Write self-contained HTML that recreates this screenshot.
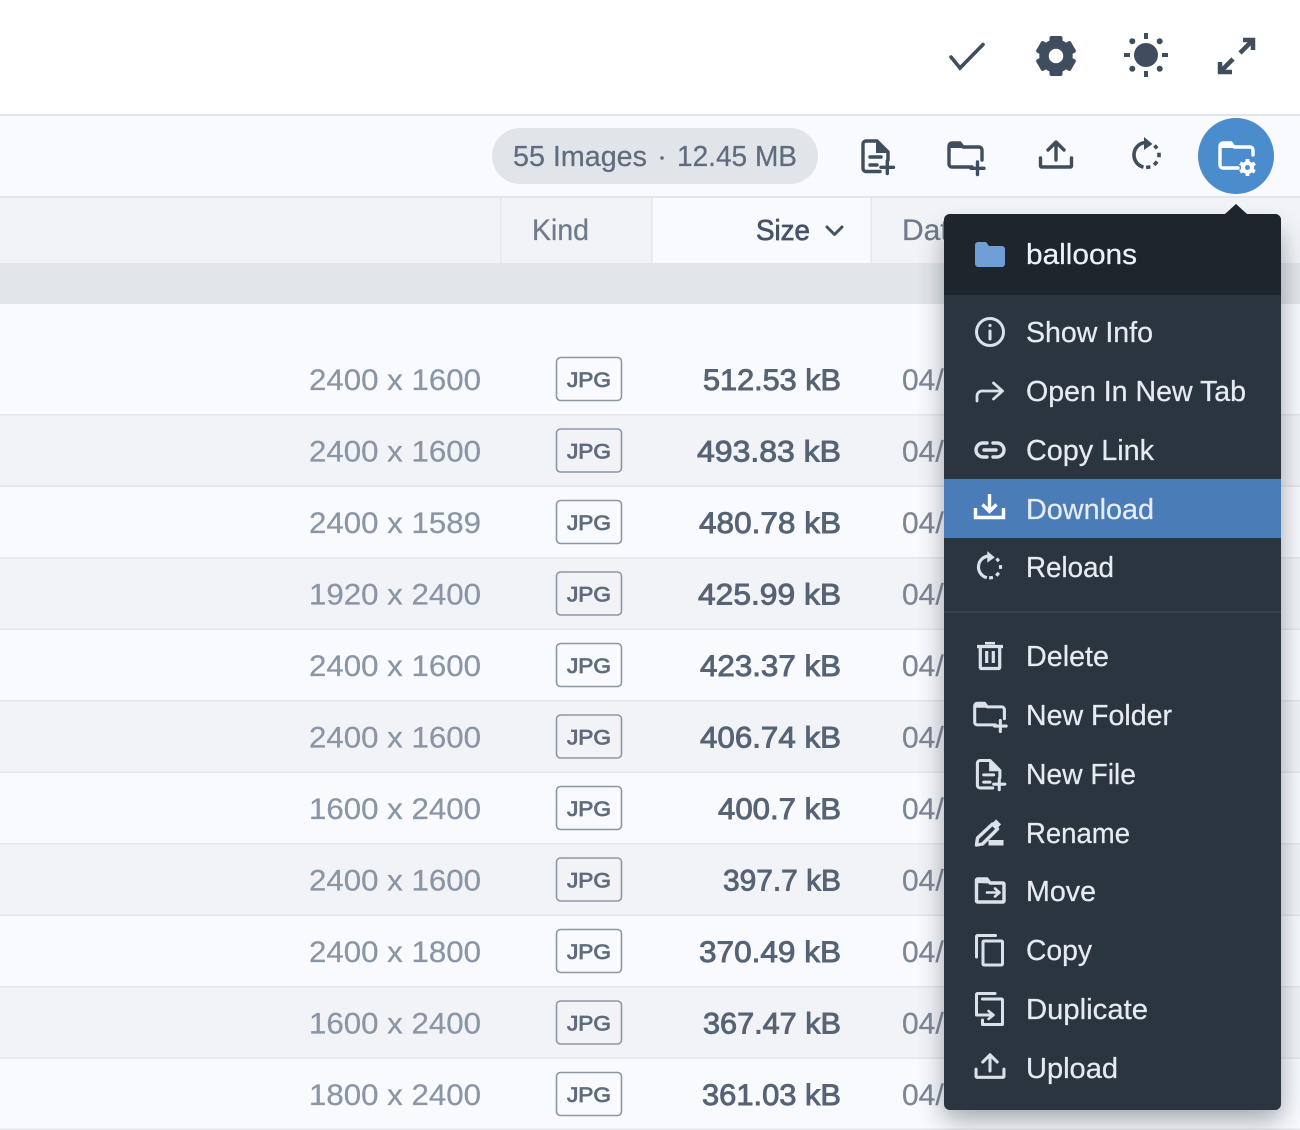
<!DOCTYPE html>
<html><head><meta charset="utf-8"><title>Files</title>
<style>
html,body{margin:0;padding:0;background:#fff}
svg{display:block}
text{font-family:"Liberation Sans",sans-serif}
.d{font-size:30px;fill:#8a96a6;stroke:#8a96a6;stroke-width:.25}
.s{font-size:30px;fill:#566375;stroke:#566375;stroke-width:.9}
.j{font-size:21px;fill:#5f6c7d;stroke:#5f6c7d;stroke-width:.85}
.t{font-size:30px;fill:#6f7a8a;stroke:#6f7a8a;stroke-width:.25}
.m{font-size:29px;fill:#e6ebf0;stroke:#e6ebf0;stroke-width:.25}
.b{fill:none;stroke:#8c97a5;stroke-width:1.6}
.i{fill:none;stroke:currentColor;stroke-width:3.4;stroke-linecap:round;stroke-linejoin:round}
.f{fill:currentColor;stroke:none}
</style></head><body>
<svg width="1300" height="1130" viewBox="0 0 1300 1130" xmlns="http://www.w3.org/2000/svg">
<defs>
<filter id="sh" x="-20%" y="-20%" width="140%" height="140%"><feGaussianBlur stdDeviation="13"/></filter>
<symbol id="folderplus" overflow="visible"><g class="i"><path d="M6,11 H-14 a3,3 0 0 1 -3,-3 V-10 a3,3 0 0 1 3,-3 H-6 l3,4 H13 a3,3 0 0 1 3,3 V4"/><path class="f" d="M-17,-8 V-10 a3,3 0 0 1 3,-3 H-6 l4,5 Z"/><path d="M11.500,6 V18.500 M5,12.300 H18"/></g></symbol>
<symbol id="fileplus" overflow="visible"><g class="i"><path d="M3,15.500 H-11 a3,3 0 0 1 -3,-3 V-12 a3,3 0 0 1 3,-3 H0 L11,-4 V4"/><path class="f" d="M-1,-15 L11,-3 H-1 Z"/><path d="M-7,1 H4 M-7,9 H0"/><path d="M10.300,5 V17.500 M4,11.300 H16.500"/></g></symbol>
<symbol id="upload" overflow="visible"><g class="i"><path d="M-15.500,3 V11 a1,1 0 0 0 1,1 H14.500 a1,1 0 0 0 1,-1 V3"/><path d="M0,5 V-12 M-8,-5 L0,-13 L8,-5"/></g></symbol>
<symbol id="reload" overflow="visible"><g fill="none" stroke="currentColor" stroke-width="3.600"><path d="M-1,-12.500 A12.500,12.500 0 0 0 -3,12.100"/><path fill="currentColor" stroke="none" d="M-2.500,-18 L6,-11 L-2.500,-5 Z"/><path d="M8,-9.600 L10.600,-6.600 M12.500,-2.200 V2.200 M10.600,6.600 L7.700,9.900 M3.900,11.900 L-.4,12.500"/></g></symbol>
</defs>

<!-- top bar -->
<rect width="1300" height="115" fill="#fff"/>
<rect y="114" width="1300" height="2" fill="#e2e6eb"/>
<!-- toolbar -->
<rect y="116" width="1300" height="81" fill="#f8fafd"/>
<rect y="196" width="1300" height="2" fill="#e2e6eb"/>
<!-- header -->
<rect y="198" width="1300" height="65" fill="#f1f3f6"/>
<rect x="652" y="198" width="219" height="65" fill="#f8fafd"/>
<rect x="500" y="198" width="1.5" height="65" fill="#e4e7ec"/>
<rect x="651" y="198" width="1.5" height="65" fill="#e4e7ec"/>
<rect x="870.5" y="198" width="1.5" height="65" fill="#e4e7ec"/>
<!-- group -->
<rect y="263" width="1300" height="41" fill="#e2e5ea"/>
<!-- rows -->
<rect y="304" width="1300" height="826" fill="#f8fafd"/>
<rect y="415" width="1300" height="71" fill="#f1f3f6"/>
<rect y="558" width="1300" height="71" fill="#f1f3f6"/>
<rect y="701" width="1300" height="71" fill="#f1f3f6"/>
<rect y="844" width="1300" height="71" fill="#f1f3f6"/>
<rect y="987" width="1300" height="71" fill="#f1f3f6"/>
<g fill="#e3e6eb">
<rect y="414" width="1300" height="1.5"/><rect y="485.5" width="1300" height="1.5"/><rect y="557" width="1300" height="1.5"/><rect y="628.5" width="1300" height="1.5"/><rect y="700" width="1300" height="1.5"/><rect y="771.5" width="1300" height="1.5"/><rect y="843" width="1300" height="1.5"/><rect y="914.5" width="1300" height="1.5"/><rect y="986" width="1300" height="1.5"/><rect y="1057.5" width="1300" height="1.5"/><rect y="1128.5" width="1300" height="1.5"/>
</g>

<!-- header text -->
<text class="t" x="532" y="240" textLength="57" lengthAdjust="spacingAndGlyphs">Kind</text>
<text x="756" y="240" font-size="29" fill="#465365" stroke="#465365" stroke-width=".7" textLength="54" lengthAdjust="spacingAndGlyphs">Size</text>
<path d="M827,227 L834.500,234.500 L842,227" fill="none" stroke="#465365" stroke-width="3" stroke-linecap="round" stroke-linejoin="round"/>
<text class="t" x="902" y="240">Date</text>

<!-- dimension column -->
<text class="d" x="309" y="390" textLength="172" lengthAdjust="spacingAndGlyphs">2400 x 1600</text>
<text class="d" x="309" y="461.500" textLength="172" lengthAdjust="spacingAndGlyphs">2400 x 1600</text>
<text class="d" x="309" y="533" textLength="172" lengthAdjust="spacingAndGlyphs">2400 x 1589</text>
<text class="d" x="309" y="604.500" textLength="172" lengthAdjust="spacingAndGlyphs">1920 x 2400</text>
<text class="d" x="309" y="676" textLength="172" lengthAdjust="spacingAndGlyphs">2400 x 1600</text>
<text class="d" x="309" y="747.500" textLength="172" lengthAdjust="spacingAndGlyphs">2400 x 1600</text>
<text class="d" x="309" y="819" textLength="172" lengthAdjust="spacingAndGlyphs">1600 x 2400</text>
<text class="d" x="309" y="890.500" textLength="172" lengthAdjust="spacingAndGlyphs">2400 x 1600</text>
<text class="d" x="309" y="962" textLength="172" lengthAdjust="spacingAndGlyphs">2400 x 1800</text>
<text class="d" x="309" y="1033.500" textLength="172" lengthAdjust="spacingAndGlyphs">1600 x 2400</text>
<text class="d" x="309" y="1105" textLength="172" lengthAdjust="spacingAndGlyphs">1800 x 2400</text>

<!-- badges -->
<g>
<rect class="b" x="556.500" y="357.500" width="65" height="43" rx="4"/><text class="j" x="567" y="387" textLength="44" lengthAdjust="spacingAndGlyphs">JPG</text>
<rect class="b" x="556.500" y="429" width="65" height="43" rx="4"/><text class="j" x="567" y="458.500" textLength="44" lengthAdjust="spacingAndGlyphs">JPG</text>
<rect class="b" x="556.500" y="500.500" width="65" height="43" rx="4"/><text class="j" x="567" y="530" textLength="44" lengthAdjust="spacingAndGlyphs">JPG</text>
<rect class="b" x="556.500" y="572" width="65" height="43" rx="4"/><text class="j" x="567" y="601.500" textLength="44" lengthAdjust="spacingAndGlyphs">JPG</text>
<rect class="b" x="556.500" y="643.500" width="65" height="43" rx="4"/><text class="j" x="567" y="673" textLength="44" lengthAdjust="spacingAndGlyphs">JPG</text>
<rect class="b" x="556.500" y="715" width="65" height="43" rx="4"/><text class="j" x="567" y="744.500" textLength="44" lengthAdjust="spacingAndGlyphs">JPG</text>
<rect class="b" x="556.500" y="786.500" width="65" height="43" rx="4"/><text class="j" x="567" y="816" textLength="44" lengthAdjust="spacingAndGlyphs">JPG</text>
<rect class="b" x="556.500" y="858" width="65" height="43" rx="4"/><text class="j" x="567" y="887.500" textLength="44" lengthAdjust="spacingAndGlyphs">JPG</text>
<rect class="b" x="556.500" y="929.500" width="65" height="43" rx="4"/><text class="j" x="567" y="959" textLength="44" lengthAdjust="spacingAndGlyphs">JPG</text>
<rect class="b" x="556.500" y="1001" width="65" height="43" rx="4"/><text class="j" x="567" y="1030.500" textLength="44" lengthAdjust="spacingAndGlyphs">JPG</text>
<rect class="b" x="556.500" y="1072.500" width="65" height="43" rx="4"/><text class="j" x="567" y="1102" textLength="44" lengthAdjust="spacingAndGlyphs">JPG</text>
</g>

<!-- size column -->
<text class="s" x="703" y="390" textLength="138" lengthAdjust="spacingAndGlyphs">512.53 kB</text>
<text class="s" x="697" y="461.500" textLength="144" lengthAdjust="spacingAndGlyphs">493.83 kB</text>
<text class="s" x="699" y="533" textLength="142" lengthAdjust="spacingAndGlyphs">480.78 kB</text>
<text class="s" x="698" y="604.500" textLength="143" lengthAdjust="spacingAndGlyphs">425.99 kB</text>
<text class="s" x="700" y="676" textLength="141" lengthAdjust="spacingAndGlyphs">423.37 kB</text>
<text class="s" x="700" y="747.500" textLength="141" lengthAdjust="spacingAndGlyphs">406.74 kB</text>
<text class="s" x="718" y="819" textLength="123" lengthAdjust="spacingAndGlyphs">400.7 kB</text>
<text class="s" x="723" y="890.500" textLength="118" lengthAdjust="spacingAndGlyphs">397.7 kB</text>
<text class="s" x="699" y="962" textLength="142" lengthAdjust="spacingAndGlyphs">370.49 kB</text>
<text class="s" x="703" y="1033.500" textLength="138" lengthAdjust="spacingAndGlyphs">367.47 kB</text>
<text class="s" x="702" y="1105" textLength="139" lengthAdjust="spacingAndGlyphs">361.03 kB</text>

<!-- date column -->
<g class="d" style="fill:#7b8696;stroke:#7b8696">
<text x="902" y="390">04/</text><text x="902" y="461.500">04/</text><text x="902" y="533">04/</text><text x="902" y="604.500">04/</text><text x="902" y="676">04/</text><text x="902" y="747.500">04/</text><text x="902" y="819">04/</text><text x="902" y="890.500">04/</text><text x="902" y="962">04/</text><text x="902" y="1033.500">04/</text><text x="902" y="1105">04/</text>
</g>

<!-- top icons -->
<g style="color:#3f4d5f">
<path d="M951,57 L960,68 L983,44.500" fill="none" stroke="currentColor" stroke-width="3.600" stroke-linecap="round" stroke-linejoin="miter"/>
<g transform="translate(1056,56)">
<circle r="12" fill="none" stroke="currentColor" stroke-width="9.500"/>
<g fill="currentColor">
<rect x="-6.500" y="-20" width="13" height="8" rx="2"/>
<rect x="-6.500" y="-20" width="13" height="8" rx="2" transform="rotate(60)"/>
<rect x="-6.500" y="-20" width="13" height="8" rx="2" transform="rotate(120)"/>
<rect x="-6.500" y="-20" width="13" height="8" rx="2" transform="rotate(180)"/>
<rect x="-6.500" y="-20" width="13" height="8" rx="2" transform="rotate(240)"/>
<rect x="-6.500" y="-20" width="13" height="8" rx="2" transform="rotate(300)"/>
</g>
</g>
<g transform="translate(1146,55)">
<circle r="12" fill="currentColor"/>
<path d="M0,-22 V-16 M0,16 V22 M-22,0 H-16 M16,0 H22" stroke="currentColor" stroke-width="4"/>
<circle cx="-13.700" cy="-13.700" r="3" fill="currentColor"/><circle cx="13.700" cy="-13.700" r="3" fill="currentColor"/><circle cx="-13.700" cy="13.700" r="3" fill="currentColor"/><circle cx="13.700" cy="13.700" r="3" fill="currentColor"/>
</g>
<g fill="none" stroke="currentColor" stroke-width="4.500">
<path d="M1243,40 H1253 V50 M1253,40 L1240,53"/>
<path d="M1220,62 V72 H1232 M1220,72 L1233,59"/>
</g>
</g>

<!-- pill -->
<rect x="492" y="128" width="326" height="56" rx="28" fill="#e1e5ea"/>
<text x="513" y="166" font-size="29" fill="#5f6c7d" stroke="#5f6c7d" stroke-width=".25" textLength="134" lengthAdjust="spacingAndGlyphs">55 Images</text>
<circle cx="662" cy="158" r="1.800" fill="#5f6c7d"/>
<text x="677" y="166" font-size="29" fill="#5f6c7d" stroke="#5f6c7d" stroke-width=".25" textLength="120" lengthAdjust="spacingAndGlyphs">12.45 MB</text>

<!-- toolbar icons -->
<g style="color:#3f4d5f">
<use href="#fileplus" x="877" y="156"/>
<use href="#folderplus" x="966" y="156"/>
<use href="#upload" x="1056" y="155"/>
<use href="#reload" x="1146.500" y="155"/>
</g>

<!-- folder settings button -->
<circle cx="1236" cy="156" r="38" fill="#4b8ccd"/>
<g style="color:#fff">
<path class="i" d="M1238,168 H1223 a3,3 0 0 1 -3,-3 V146 a3,3 0 0 1 3,-3 H1231 l3,4 H1250 a3,3 0 0 1 3,3 V155"/>
<path class="f" d="M1220,148 V146 a3,3 0 0 1 3,-3 H1231 l4,5 Z"/>
<g transform="translate(1247.500,167.500)">
<circle r="4.500" fill="none" stroke="#fff" stroke-width="4"/>
<path d="M0,-5 V-8.500 M0,5 V8.500 M4.300,-2.500 L7.400,-4.300 M4.300,2.500 L7.400,4.300 M-4.300,-2.500 L-7.400,-4.300 M-4.300,2.500 L-7.400,4.300" stroke="#fff" stroke-width="3.800"/>
</g>
</g>

<!-- menu shadow -->
<rect x="944" y="232" width="337" height="888" rx="6" fill="#2a3340" opacity=".42" filter="url(#sh)"/>
<!-- menu -->
<path d="M1225,214 L1236,204 L1247,214 Z" fill="#1d252d"/>
<rect x="944" y="214" width="337" height="896" rx="6" fill="#2b3540"/>
<path d="M944,295 V220 a6,6 0 0 1 6,-6 H1275 a6,6 0 0 1 6,6 V295 Z" fill="#1d252d"/>
<rect x="944" y="479" width="337" height="59" fill="#4a7db8"/>
<rect x="944" y="611" width="337" height="2" fill="#37414c"/>

<path d="M975,245 a3,3 0 0 1 3,-3 H986 l3,4 H1002 a3,3 0 0 1 3,3 V264 a3,3 0 0 1 -3,3 H978 a3,3 0 0 1 -3,-3 Z" fill="#6f9fd6"/>
<text x="1026" y="264" font-size="29" fill="#eef2f6" stroke="#eef2f6" stroke-width=".25" textLength="111" lengthAdjust="spacingAndGlyphs">balloons</text>

<text class="m" x="1026" y="342" textLength="127" lengthAdjust="spacingAndGlyphs">Show Info</text>
<text class="m" x="1026" y="401" textLength="220" lengthAdjust="spacingAndGlyphs">Open In New Tab</text>
<text class="m" x="1026" y="460" textLength="128" lengthAdjust="spacingAndGlyphs">Copy Link</text>
<text class="m" x="1026" y="519" textLength="128" lengthAdjust="spacingAndGlyphs">Download</text>
<text class="m" x="1026" y="577" textLength="88" lengthAdjust="spacingAndGlyphs">Reload</text>
<text class="m" x="1026" y="666" textLength="83" lengthAdjust="spacingAndGlyphs">Delete</text>
<text class="m" x="1026" y="725" textLength="146" lengthAdjust="spacingAndGlyphs">New Folder</text>
<text class="m" x="1026" y="784" textLength="110" lengthAdjust="spacingAndGlyphs">New File</text>
<text class="m" x="1026" y="843" textLength="104" lengthAdjust="spacingAndGlyphs">Rename</text>
<text class="m" x="1026" y="901" textLength="70" lengthAdjust="spacingAndGlyphs">Move</text>
<text class="m" x="1026" y="960" textLength="66" lengthAdjust="spacingAndGlyphs">Copy</text>
<text class="m" x="1026" y="1019" textLength="122" lengthAdjust="spacingAndGlyphs">Duplicate</text>
<text class="m" x="1026" y="1078" textLength="92" lengthAdjust="spacingAndGlyphs">Upload</text>

<!-- menu icons -->
<g style="color:#dbe1e8">
<g transform="translate(990,332)" class="i"><circle r="13.500" stroke-width="3"/><path d="M0,-1 V7" stroke-width="3"/><circle cx="0" cy="-6.500" r="1.600" class="f"/></g>
<g transform="translate(989.500,391)" class="i"><path stroke-width="2.800" d="M-12.500,10 V5 a5,5 0 0 1 5,-5 H13 M4,-8 L13,0 L4,8"/></g>
<g transform="translate(990,450)" class="i"><path d="M-3,-7 H-7 a7,7 0 0 0 0,14 H-3 M3,-7 H7 a7,7 0 0 1 0,14 H3 M-6,0 H6"/></g>
<g transform="translate(989.500,507)" style="color:#fff" fill="none" stroke="currentColor" stroke-width="3.400"><path d="M-14,1 V10.500 H14 V1"/><path d="M0,-13 V4 M-7,-2.500 L0,4.500 L7,-2.500"/></g>
<use href="#reload" transform="translate(989.500,567) scale(.88)"/>
<g transform="translate(990,656)" fill="none" stroke="currentColor"><path d="M-13,-9.500 H13" stroke-width="3.200"/><path d="M-5,-12.800 H5" stroke-width="2.600"/><path d="M-9.700,-9 V11.500 a1,1 0 0 0 1,1 H8.700 a1,1 0 0 0 1,-1 V-9" stroke-width="3.200"/><path d="M-3.300,-5 V7 M3.300,-5 V7" stroke-width="3.200"/></g>
<use href="#folderplus" transform="translate(990,715) scale(.9)"/>
<use href="#fileplus" transform="translate(990,774) scale(.9)"/>
<g transform="translate(989.500,833)"><path class="i" stroke-width="3" d="M-13,12 L-12,5 L3,-9 L8,-4 L-7,11 Z"/><path d="M5,-12 L10,-7" fill="none" stroke="currentColor" stroke-width="4.500"/><rect x="-1" y="7" width="15" height="5.500" fill="currentColor"/></g>
<g transform="translate(990,891)" class="i"><path d="M-13.500,-11 V10 a1,1 0 0 0 1,1 H13 a1,1 0 0 0 1,-1 V-7 a1,1 0 0 0 -1,-1 H0 l-3,-4 H-12.500 a1,1 0 0 0 -1,1 Z"/><path class="f" d="M-14,-8 V-11 a1.500,1.500 0 0 1 1.500,-1.500 H-3 l4,5 Z"/><path d="M-3,1.500 H9 M5,-2.500 L9.500,1.500 L5,5.500" stroke-width="2.600"/></g>
<g transform="translate(989.500,950)" class="i" stroke-linecap="butt"><rect x="-6.500" y="-9" width="19.500" height="24" rx="1" stroke-width="3"/><path stroke-width="3" d="M6,-14.500 H-12 a1,1 0 0 0 -1,1 V7"/></g>
<g transform="translate(989.500,1009)" class="i"><path stroke-width="3" d="M5.500,-15.500 H-12 a1,1 0 0 0 -1,1 V6 H3"/><path stroke-width="2.600" d="M-1,2 L4,6 L-1,10"/><path stroke-width="3" d="M-7,-10 H12 a1,1 0 0 1 1,1 V15.500 H-7 V11"/></g>
<use href="#upload" transform="translate(990,1066.500) scale(.9)"/>
</g>
</svg>
</body></html>
